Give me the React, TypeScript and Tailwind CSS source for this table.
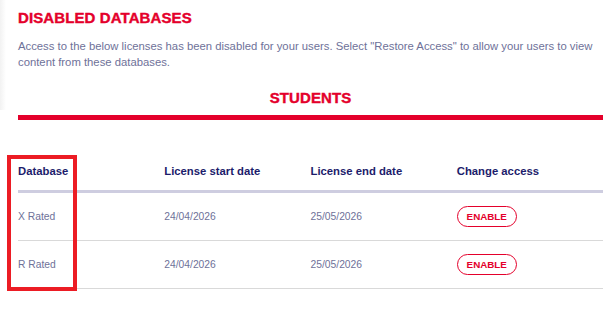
import React from "react";

const rows = [
  { name: "X Rated", start: "24/04/2026", end: "25/05/2026" },
  { name: "R Rated", start: "24/04/2026", end: "25/05/2026" },
];

export default function App() {
  return (
    <div
      className="relative w-[612px] h-[311px] overflow-hidden bg-white pl-[18px] pr-[9px]"
      style={{ fontFamily: '"Liberation Sans", Arial, sans-serif' }}
    >
      <div className="absolute left-0 top-0 h-[110px] w-[6px] bg-gradient-to-r from-[#f2f2f2] to-white" />
      <h1 className="pt-[9px] text-[15px] leading-[18px] font-black tracking-[0.1px] text-[#e4002b] [-webkit-text-stroke:0.4px_#e4002b]">
        DISABLED DATABASES
      </h1>
      <p className="mt-[11px] text-[11.3px] leading-[16px] text-[#6e7199]">
        Access to the below licenses has been disabled for your users. Select "Restore Access" to allow your users to view content from these databases.
      </p>
      <h2 className="mt-[19px] text-center text-[15px] leading-[18px] font-black tracking-[0.1px] text-[#e4002b] [-webkit-text-stroke:0.4px_#e4002b]">
        STUDENTS
      </h2>
      <div className="mt-[8px] h-[5px] bg-[#e4002b]" />
      <div className="mt-[44px]">
        <div className="grid grid-cols-4 border-b-[3px] border-[#cecde0] pb-[12px] text-[11.3px] leading-[14px] font-bold text-[#1c1c6b]">
          <div>Database</div>
          <div>License start date</div>
          <div>License end date</div>
          <div>Change access</div>
        </div>
        <div>
          {rows.map((r) => (
            <div
              key={r.name}
              className="grid h-[48px] grid-cols-4 items-center border-b border-[#d9d9d9] text-[10.3px] text-[#6e7199]"
            >
              <div>{r.name}</div>
              <div>{r.start}</div>
              <div>{r.end}</div>
              <div>
                <button className="flex h-[21px] w-[60px] items-center justify-center rounded-full border border-[#e4002b] pt-[2px] text-[9.8px] font-bold text-[#e4002b]">
                  ENABLE
                </button>
              </div>
            </div>
          ))}
        </div>
      </div>
      <div className="absolute left-[7px] top-[155px] h-[136px] w-[70px] border-4 border-[#ec1c24]" />
    </div>
  );
}
